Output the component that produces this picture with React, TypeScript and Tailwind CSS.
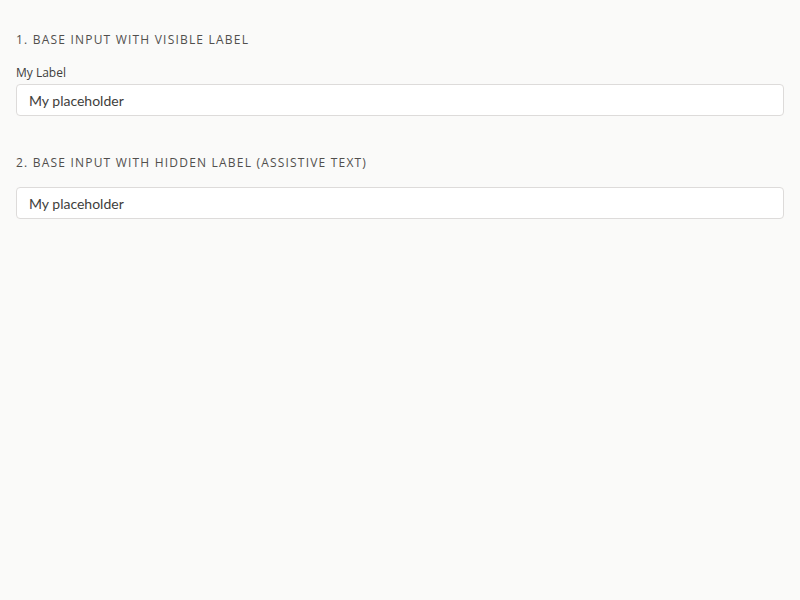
export default function App() {
  return (
    <div className="min-h-screen bg-[#fafaf9] px-4 pt-8 font-['Open_Sans',sans-serif] text-[#3e3e3c]">
      <section>
        <h2 className="text-[12px] leading-[15px] uppercase tracking-[1.2px] text-[#514f4d]">1. Base Input with Visible Label</h2>
        <div className="mt-[17px]">
          <label htmlFor="inp1" className="block text-[12px] leading-[18px] mb-[2px]">My Label</label>
          <input
            id="inp1"
            type="text"
            placeholder="My placeholder"
            className="block w-full h-8 rounded bg-white border border-[#dddbda] px-3 font-['Lato',sans-serif] text-[14px] placeholder:text-[#3e3e3c] outline-none"
          />
        </div>
      </section>
      <section className="mt-[39px]">
        <h2 className="text-[12px] leading-[15px] uppercase tracking-[1.2px] text-[#514f4d]">2. Base Input with Hidden Label (Assistive Text)</h2>
        <div className="mt-[17px]">
          <label htmlFor="inp2" className="sr-only">My Label</label>
          <input
            id="inp2"
            type="text"
            placeholder="My placeholder"
            className="block w-full h-8 rounded bg-white border border-[#dddbda] px-3 font-['Lato',sans-serif] text-[14px] placeholder:text-[#3e3e3c] outline-none"
          />
        </div>
      </section>
    </div>
  );
}
